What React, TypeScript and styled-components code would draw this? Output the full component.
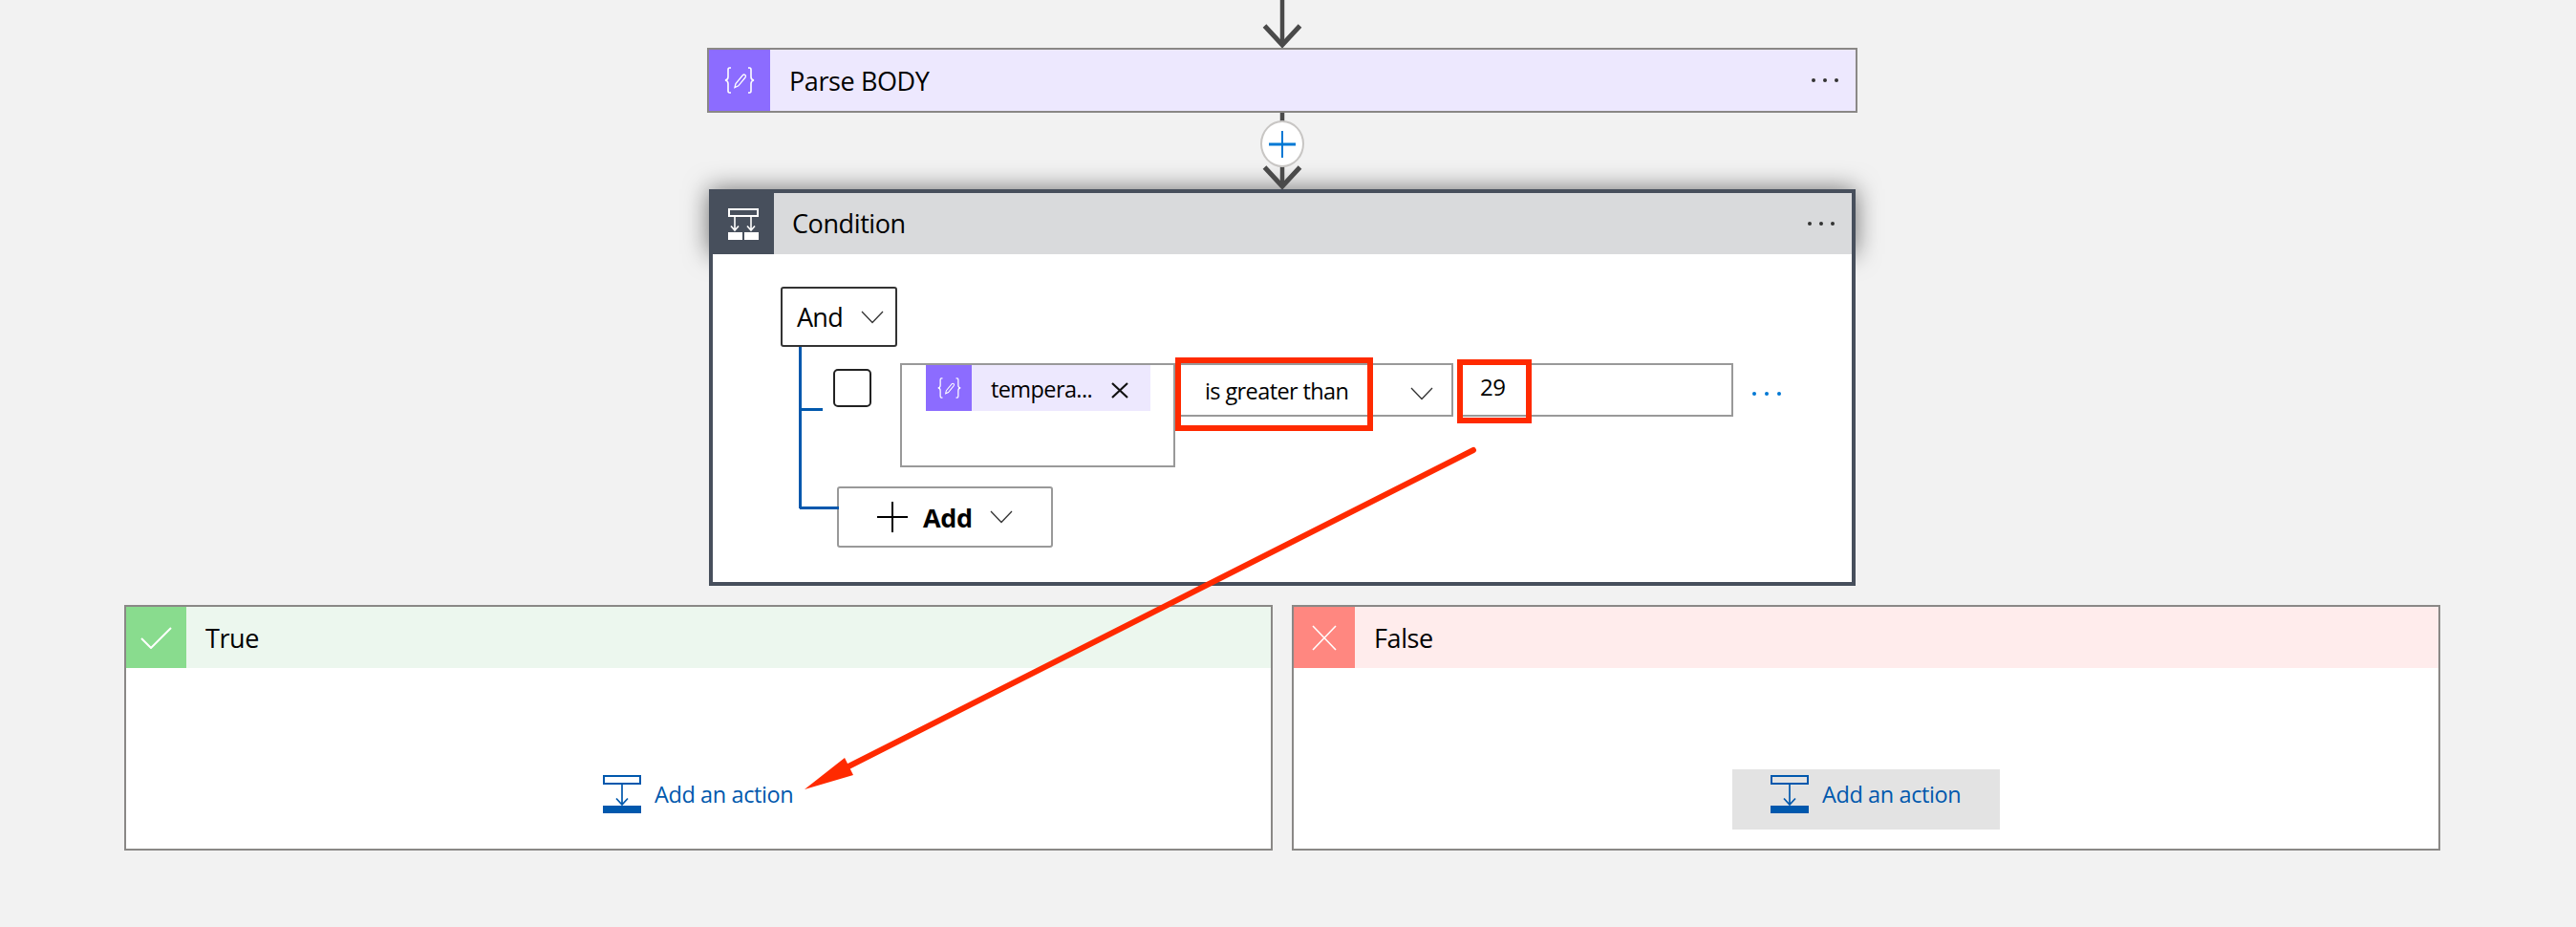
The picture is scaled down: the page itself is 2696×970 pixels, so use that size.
import React from "react";
import styled, { createGlobalStyle } from "styled-components";

const Global = createGlobalStyle`
  html, body { margin: 0; padding: 0; background: #f2f2f2; }
  body { font-family: "Open Sans", "Noto Sans", sans-serif; color: #000; }
`;

const Stage = styled.div`
  position: relative;
  width: 2696px;
  height: 970px;
  box-sizing: border-box;
  padding-right: 12px;
  overflow: hidden;
  display: flex;
  flex-direction: column;
  align-items: center;
  background: #f2f2f2;
`;

const ConnectorBox = styled.div<{ $h: number }>`
  position: relative;
  z-index: 2;
  width: 48px;
  height: ${(p) => p.$h}px;
  flex: none;
  svg { display: block; }
`;

const PlusButton = styled.div`
  position: absolute;
  left: 1px;
  top: 8px;
  width: 46px;
  height: 49px;
  box-sizing: border-box;
  border-radius: 50%;
  background: #fff;
  border: 2px solid #c8c6c4;
  display: flex;
  align-items: center;
  justify-content: center;
  svg { display: block; }
`;

const ActionCard = styled.div`
  width: 1204px;
  height: 68px;
  box-sizing: border-box;
  border: 2px solid #8a8886;
  background: #ede8fe;
  display: flex;
  align-items: center;
  flex: none;
`;

const IconBlock = styled.div<{ $bg: string; $w: number }>`
  width: ${(p) => p.$w}px;
  height: 100%;
  flex: none;
  background: ${(p) => p.$bg};
  display: flex;
  align-items: center;
  justify-content: center;
  svg { display: block; }
`;

const Title = styled.div<{ $ml: number; $dy?: number }>`
  margin-left: ${(p) => p.$ml}px;
  padding-top: ${(p) => p.$dy || 0}px;
  font-size: 27px;
  line-height: 36px;
  letter-spacing: -0.4px;
  color: #000;
  flex: 1;
`;

const MoreDots = styled.div<{ $c?: string }>`
  display: flex;
  gap: 8px;
  margin-right: 18px;
  flex: none;
  i {
    display: block;
    width: 4px;
    height: 4px;
    border-radius: 50%;
    background: ${(p) => p.$c || "#333"};
  }
`;

const ConditionCard = styled.div`
  width: 1200px;
  flex: none;
  display: flex;
  flex-direction: column;
`;

const ConditionHeader = styled.div`
  height: 68px;
  box-sizing: border-box;
  border: 4px solid #474f5c;
  border-bottom: 0;
  background: #d9dadc;
  display: flex;
  align-items: center;
  box-shadow: 0 0 26px rgba(0, 0, 0, 0.55);
`;

const ConditionBody = styled.div`
  position: relative;
  z-index: 1;
  box-sizing: border-box;
  height: 347px;
  padding: 34px 0 0 71px;
  background: #fff;
  border: 4px solid #474f5c;
  border-top: 0;
`;

const AndButton = styled.div`
  width: 122px;
  height: 63px;
  box-sizing: border-box;
  border: 2px solid #333;
  border-radius: 3px;
  display: flex;
  align-items: center;
  padding-left: 15px;
  font-size: 27px;
  letter-spacing: -0.75px;
  svg { display: block; margin-left: 19px; }
`;

const Tree = styled.div`
  position: relative;
  padding-top: 17px;
  &::before {
    content: "";
    position: absolute;
    left: 19px;
    top: 0;
    width: 3px;
    height: 169px;
    background: #0058ad;
  }
`;

const ConditionRow = styled.div`
  position: relative;
  display: flex;
  align-items: flex-start;
  padding-left: 55px;
  &::before {
    content: "";
    position: absolute;
    left: 19px;
    top: 47px;
    width: 25px;
    height: 3px;
    background: #0058ad;
  }
`;

const CheckBox = styled.div`
  width: 40px;
  height: 40px;
  box-sizing: border-box;
  margin: 6px 30px 0 0;
  border: 2px solid #222;
  border-radius: 5px;
  flex: none;
`;

const TokenField = styled.div`
  width: 288px;
  height: 109px;
  box-sizing: border-box;
  border: 2px solid #999;
  padding-left: 25px;
  flex: none;
`;

const Token = styled.div`
  width: 235px;
  height: 48px;
  background: #ede8fe;
  display: flex;
  align-items: center;
  svg { display: block; }
  > svg { margin-top: 5px; }
`;

const TokenText = styled.span`
  margin-left: 20px;
  width: 126px;
  padding-top: 2px;
  font-size: 23.5px;
  letter-spacing: -0.6px;
  white-space: nowrap;
`;

const OperatorBox = styled.div`
  position: relative;
  margin-left: -2px;
  width: 293px;
  height: 56px;
  box-sizing: border-box;
  border: 2px solid #999;
  display: flex;
  align-items: center;
  padding: 2px 19px 0 31px;
  font-size: 23.5px;
  letter-spacing: -0.6px;
  flex: none;
  justify-content: space-between;
  svg { display: block; margin-top: 6px; }
`;

const ValueBox = styled.div`
  position: relative;
  margin-left: 5px;
  width: 288px;
  height: 56px;
  box-sizing: border-box;
  border: 2px solid #999;
  padding: 3px 0 0 21px;
  font-size: 24px;
  line-height: 40px;
  letter-spacing: -0.4px;
  flex: none;
`;

const RedMark = styled.div<{ $l: number; $t: number; $w: number; $h: number }>`
  position: absolute;
  left: ${(p) => p.$l}px;
  top: ${(p) => p.$t}px;
  width: ${(p) => p.$w}px;
  height: ${(p) => p.$h}px;
  box-sizing: border-box;
  border: 6px solid #ff2a00;
`;

const RowDots = styled(MoreDots)`
  margin: 30px 0 0 20px;
  gap: 9px;
`;

const AddButton = styled.div`
  position: relative;
  margin: 20px 0 0 59px;
  width: 226px;
  height: 64px;
  box-sizing: border-box;
  border: 2px solid #999;
  border-radius: 3px;
  display: flex;
  align-items: center;
  padding-left: 40px;
  svg { display: block; flex: none; }
  &::before {
    content: "";
    position: absolute;
    left: -41px;
    top: 19px;
    width: 41px;
    height: 3px;
    background: #0058ad;
  }
`;

const AddLabel = styled.span`
  margin: 0 18px 0 16px;
  font-size: 27px;
  font-weight: 700;
  letter-spacing: -0.3px;
`;

const BranchRow = styled.div`
  margin-top: 20px;
  display: flex;
  gap: 20px;
  flex: none;
`;

const BranchCard = styled.div`
  width: 1202px;
  height: 257px;
  box-sizing: border-box;
  border: 2px solid #8a8886;
  background: #fff;
  display: flex;
  flex-direction: column;
`;

const BranchHeader = styled.div<{ $bg: string }>`
  height: 64px;
  flex: none;
  background: ${(p) => p.$bg};
  display: flex;
  align-items: center;
`;

const BranchBody = styled.div`
  flex: 1;
  display: flex;
  justify-content: center;
  padding: 106px 0 0 0;
`;

const ActionLink = styled.div<{ $hover?: boolean }>`
  width: 280px;
  height: 63px;
  box-sizing: border-box;
  display: flex;
  align-items: flex-start;
  padding: 6px 0 0 40px;
  background: ${(p) => (p.$hover ? "#e3e3e3" : "transparent")};
  color: #0058ad;
  font-size: 23.5px;
  letter-spacing: -0.4px;
  svg { display: block; flex: none; }
  span { margin: 4px 0 0 14px; line-height: 32px; white-space: nowrap; }
`;

const Overlay = styled.svg`
  position: absolute;
  left: 0;
  top: 0;
  z-index: 5;
  pointer-events: none;
`;

const FlowArrow = ({ h, from }: { h: number; from: number }) => (
  <svg width="48" height={h} viewBox={`0 0 48 ${h}`}>
    <path d={`M24 ${from}V${h - 3}`} stroke="#4a4a4a" strokeWidth="4.5" fill="none" />
    <path d={`M5.5 ${h - 23}L24 ${h - 3}L42.5 ${h - 23}`} stroke="#4a4a4a" strokeWidth="5" fill="none" />
  </svg>
);

const ParseIcon = ({ s }: { s: number }) => (
  <svg width={s} height={s * 0.875} viewBox="0 0 32 28" fill="none" stroke="#fff" strokeWidth="1.6">
    <path d="M7 1H5.5Q4 1 4 3V10.5Q4 13.5 1 14Q4 14.5 4 17.5V25Q4 27 5.5 27H7" />
    <path d="M25 1H26.5Q28 1 28 3V10.5Q28 13.5 31 14Q28 14.5 28 17.5V25Q28 27 26.5 27H25" />
    <path d="M11 21.5L12 17.5L19.5 8.5Q20.5 7.5 22 8.5Q23 9.7 22 11L14.8 19.8Z" strokeWidth="1.3" />
  </svg>
);

const ConditionIcon = () => (
  <svg width="32" height="33" viewBox="0 0 32 33" fill="none" stroke="#fff">
    <rect x="1" y="1" width="30" height="7" strokeWidth="2" />
    <path d="M7 8V23M3 18.5L7 23L11 18.5M24 8V23M20 18.5L24 23L28 18.5" strokeWidth="1.6" />
    <rect x="0" y="25" width="15" height="8" fill="#fff" stroke="none" />
    <rect x="17" y="25" width="15" height="8" fill="#fff" stroke="none" />
  </svg>
);

const Chevron = ({ w = 24 }: { w?: number }) => (
  <svg width={w} height="14" viewBox="0 0 24 14" fill="none" stroke="#333" strokeWidth="1.3">
    <path d="M1 1L12 12.5L23 1" />
  </svg>
);

const InsertIcon = ({ w }: { w: number }) => (
  <svg width={w} height="40" viewBox={`0 0 ${w} 40`} fill="none" stroke="#0058ad">
    <rect x="1" y="1" width={w - 2} height="8" strokeWidth="2" />
    <path d={`M${w / 2} 9V31M${w / 2 - 6} 24.5L${w / 2} 31L${w / 2 + 6} 24.5`} strokeWidth="1.7" />
    <rect x="0" y="32" width={w} height="8" fill="#0058ad" stroke="none" />
  </svg>
);

const Dots = ({ c }: { c?: string }) => (
  <MoreDots $c={c}>
    <i />
    <i />
    <i />
  </MoreDots>
);

export default function App() {
  return (
    <Stage>
      <Global />
      <ConnectorBox $h={50}>
        <FlowArrow h={50} from={0} />
      </ConnectorBox>
      <ActionCard>
        <IconBlock $bg="#8c6cff" $w={64}>
          <ParseIcon s={32} />
        </IconBlock>
        <Title $ml={20} $dy={2}>Parse BODY</Title>
        <Dots />
      </ActionCard>
      <ConnectorBox $h={80}>
        <FlowArrow h={80} from={0} />
        <PlusButton>
          <svg width="28" height="28" viewBox="0 0 28 28">
            <path d="M0 14H28" stroke="#0078d4" strokeWidth="3" />
            <path d="M14 0V28" stroke="#0078d4" strokeWidth="2" />
          </svg>
        </PlusButton>
      </ConnectorBox>
      <ConditionCard>
        <ConditionHeader>
          <IconBlock $bg="#474f5c" $w={64}>
            <ConditionIcon />
          </IconBlock>
          <Title $ml={19}>Condition</Title>
          <Dots />
        </ConditionHeader>
        <ConditionBody>
          <AndButton>
            And
            <Chevron />
          </AndButton>
          <Tree>
            <ConditionRow>
              <CheckBox />
              <TokenField>
                <Token>
                  <IconBlock $bg="#8c6cff" $w={48}>
                    <ParseIcon s={25} />
                  </IconBlock>
                  <TokenText>tempera...</TokenText>
                  <svg width="18" height="17" viewBox="0 0 18 17" fill="none" stroke="#111" strokeWidth="2.2">
                    <path d="M1 1L17 16M17 1L1 16" />
                  </svg>
                </Token>
              </TokenField>
              <OperatorBox>
                is greater than
                <Chevron />
                <RedMark $l={0} $t={-8} $w={207} $h={77} />
              </OperatorBox>
              <ValueBox>
                29
                <RedMark $l={-3} $t={-6} $w={78} $h={67} />
              </ValueBox>
              <RowDots $c="#0078d4">
                <i />
                <i />
                <i />
              </RowDots>
            </ConditionRow>
            <AddButton>
              <svg width="32" height="32" viewBox="0 0 32 32">
                <path d="M0 16H32M16 0V32" stroke="#000" strokeWidth="2" />
              </svg>
              <AddLabel>Add</AddLabel>
              <Chevron />
            </AddButton>
          </Tree>
        </ConditionBody>
      </ConditionCard>
      <BranchRow>
        <BranchCard>
          <BranchHeader $bg="#ecf7ee">
            <IconBlock $bg="#89dc8e" $w={63}>
              <svg width="33" height="23" viewBox="0 0 33 23" fill="none" stroke="#fff" strokeWidth="2">
                <path d="M1 12L11 22L32 1" />
              </svg>
            </IconBlock>
            <Title $ml={20} $dy={2}>True</Title>
          </BranchHeader>
          <BranchBody>
            <ActionLink>
              <InsertIcon w={40} />
              <span>Add an action</span>
            </ActionLink>
          </BranchBody>
        </BranchCard>
        <BranchCard>
          <BranchHeader $bg="#ffecec">
            <IconBlock $bg="#ff8780" $w={64}>
              <svg width="26" height="27" viewBox="0 0 26 27" fill="none" stroke="#fff" strokeWidth="1.6">
                <path d="M1 1L25 26M25 1L1 26" />
              </svg>
            </IconBlock>
            <Title $ml={20} $dy={2}>False</Title>
          </BranchHeader>
          <BranchBody>
            <ActionLink $hover>
              <InsertIcon w={40} />
              <span>Add an action</span>
            </ActionLink>
          </BranchBody>
        </BranchCard>
      </BranchRow>
      <Overlay width="2696" height="970" viewBox="0 0 2696 970">
        <path d="M1542 471L888 802" stroke="#ff2a00" strokeWidth="6" strokeLinecap="round" fill="none" />
        <path d="M842 826L884 793L893 811Z" fill="#ff2a00" />
      </Overlay>
    </Stage>
  );
}
